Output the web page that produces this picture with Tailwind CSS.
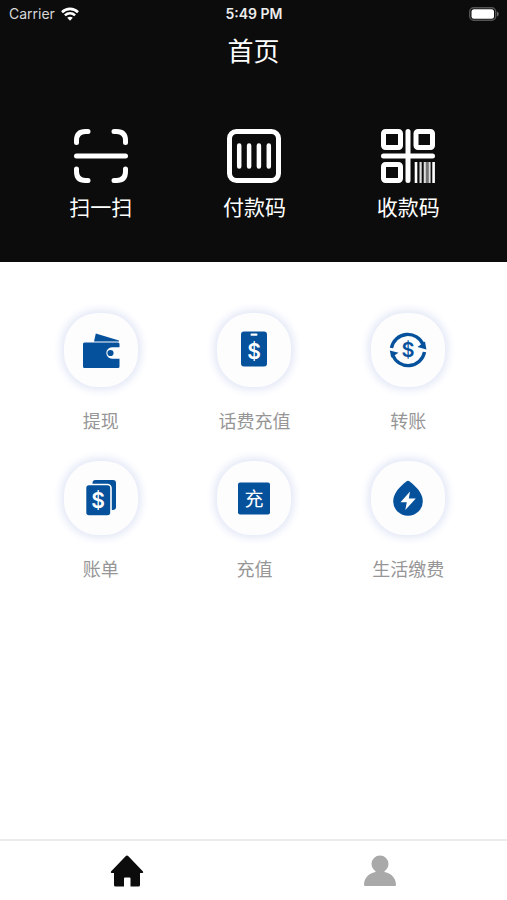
<!DOCTYPE html>
<html lang="zh-CN">
<head>
<meta charset="utf-8">
<meta name="viewport" content="width=device-width, initial-scale=1">
<title>首页</title>
<script src="https://cdn.jsdelivr.net/npm/@tailwindcss/browser@4"></script>
</head>
<body class="flex min-h-screen flex-col bg-white font-['Inter','Noto_Sans_CJK_SC',sans-serif]">
<header class="bg-[#0c0c0c] pb-[39px] text-white">
  <div class="grid h-7 grid-cols-3 items-center pr-2 pl-[9px] text-[14px] leading-5">
    <div class="flex items-center gap-[6px] text-[#d8d8d8]">
      <span>Carrier</span>
      <svg class="h-[14px] w-[18px]" viewBox="0 0 18 14" fill="none" stroke="#fff" stroke-width="2.6" aria-hidden="true">
        <path d="M1 5.2C5.6.8 12.4.8 17 5.2"/><path d="M3.9 8.4c3-2.8 7.200-2.800 10.200 0"/><path d="M6.200 10.800c1.700-1.500 3.900-1.500 5.600 0L9 13.700z" fill="#fff" stroke="none"/>
      </svg>
    </div>
    <div class="text-center text-[14px] font-semibold text-[#ededed]">5:49 PM</div>
    <svg class="h-[14px] w-[30px] justify-self-end" viewBox="0 0 30 14" aria-hidden="true">
      <rect x=".7" y=".7" width="26" height="12.600" rx="4" fill="none" stroke="#555" stroke-width="1.400"/>
      <rect x="2.500" y="2.300" width="22.500" height="9.400" rx="2.500" fill="#fff"/>
      <path d="M28 4.500c2.300 1 2.300 4 0 5z" fill="#666"/>
    </svg>
  </div>
  <h1 class="text-center text-[26px] leading-[48px]">首页</h1>
  <nav class="mt-[53px] grid grid-cols-3 pr-[22px] pl-6 text-[21px] leading-[30px]" aria-label="快捷操作">
    <button class="flex flex-col items-center gap-[10px]">
      <svg class="size-[54px]" viewBox="0 0 54 54" fill="none" stroke="#fff" stroke-width="5" stroke-linecap="round" aria-hidden="true">
        <path d="M2.500 13.500v-2Q2.500 2.500 11.500 2.500H14M40 2.500h2.500Q51.500 2.500 51.500 11.500V13.500M2.500 40v2.500Q2.500 51.500 11.500 51.500H14M40 51.500h2.500Q51.500 51.500 51.500 42.500V40M2.500 27h49"/>
      </svg>
      <span>扫一扫</span>
    </button>
    <button class="flex flex-col items-center gap-[10px]">
      <svg class="size-[54px]" viewBox="0 0 54 54" fill="none" stroke="#fff" aria-hidden="true">
        <rect x="2.500" y="2.500" width="49" height="49" rx="7" stroke-width="5"/>
        <path d="M12.200 16.500v21M22.100 16.500v21M31.900 16.500v21M41.800 16.500v21" stroke-width="4.500" stroke-linecap="round"/>
      </svg>
      <span>付款码</span>
    </button>
    <button class="flex flex-col items-center gap-[10px]">
      <svg class="size-[54px]" viewBox="0 0 54 54" fill="none" stroke="#fff" stroke-width="5" aria-hidden="true">
        <rect x="2.500" y="2.500" width="17" height="16" rx="2"/><rect x="35" y="2.500" width="16.500" height="16" rx="2"/><rect x="2.500" y="35.500" width="17" height="16" rx="2"/>
        <path d="M27 2.500v49M2.500 27h49" stroke-linecap="round"/>
        <path d="M35 33v21M52.600 33v21" stroke-width="2.600"/><path d="M39.600 33v21M43.800 33v21M48.500 33v21" stroke-width="2.200" stroke="#ddd"/><path d="M46 33v21" stroke-width="1.500" stroke="#999"/>
      </svg>
      <span>收款码</span>
    </button>
  </nav>
</header>

<main class="flex-1">
  <div class="grid grid-cols-3 gap-y-[25px] pt-[51px] pr-[22px] pl-6 text-[18px] leading-7 text-[#969696]">
    <button class="flex flex-col items-center gap-[21px]">
      <span class="grid size-[74px] place-items-center rounded-[34px] bg-[#fdfdfe] shadow-[0_0_9px_3px_#e2e7f6]">
        <svg class="size-[40px]" viewBox="0 0 40 40" fill="#05519b" aria-hidden="true">
          <path d="M14.800 3.500 38 10.500v.9H13z"/><path d="M3.500 12.500H37q1.500 0 1.500 1.500v3.300h-7.500a5.700 5.700 0 0 0 0 11.400h7.500v7.800q0 1.500-1.500 1.500H3.500Q2 38 2 36.500V14Q2 12.500 3.500 12.500z"/><circle cx="29.500" cy="23" r="3.100"/>
        </svg>
      </span>
      <span>提现</span>
    </button>
    <button class="flex flex-col items-center gap-[21px]">
      <span class="grid size-[74px] place-items-center rounded-[34px] bg-[#fdfdfe] shadow-[0_0_9px_3px_#e2e7f6]">
        <svg class="size-[40px]" viewBox="0 0 40 40" aria-hidden="true">
          <rect x="7" y="1.500" width="26" height="35" rx="3" fill="#05519b"/><rect x="16.500" y="3.500" width="7" height="2.200" rx="1" fill="#fff"/>
          <text x="20" y="28.500" text-anchor="middle" font-size="21" font-weight="600" fill="#fff" font-family="Inter,sans-serif">$</text>
        </svg>
      </span>
      <span>话费充值</span>
    </button>
    <button class="flex flex-col items-center gap-[21px]">
      <span class="grid size-[74px] place-items-center rounded-[34px] bg-[#fdfdfe] shadow-[0_0_9px_3px_#e2e7f6]">
        <svg class="size-[40px]" viewBox="0 0 40 40" aria-hidden="true">
          <path d="M3.500 18A16.600 16.600 0 0 1 35.300 15M36.500 22A16.600 16.600 0 0 1 4.700 25" fill="none" stroke="#05519b" stroke-width="3.400"/>
          <path d="M37 11.500 38.400 19.500 29.500 17zM1.800 20.500 10.500 22.800 3.200 27.500z" fill="#05519b"/>
          <text x="20" y="27" text-anchor="middle" font-size="20" font-weight="600" fill="#05519b" font-family="Inter,sans-serif">$</text>
        </svg>
      </span>
      <span>转账</span>
    </button>
    <button class="flex flex-col items-center gap-[21px]">
      <span class="grid size-[74px] place-items-center rounded-[34px] bg-[#fdfdfe] shadow-[0_0_9px_3px_#e2e7f6]">
        <svg class="size-[40px]" viewBox="0 0 40 40" aria-hidden="true">
          <rect x="11.500" y="2" width="23.500" height="30" rx="3" fill="#05519b"/>
          <rect x="4.500" y="6.500" width="25.500" height="31.500" rx="3.500" fill="#05519b" stroke="#fff" stroke-width="1.600"/>
          <text x="17" y="30" text-anchor="middle" font-size="21" font-weight="600" fill="#fff" font-family="Inter,sans-serif">$</text>
        </svg>
      </span>
      <span>账单</span>
    </button>
    <button class="flex flex-col items-center gap-[21px]">
      <span class="grid size-[74px] place-items-center rounded-[34px] bg-[#fdfdfe] shadow-[0_0_9px_3px_#e2e7f6]">
        <svg class="size-[40px]" viewBox="0 0 40 40" aria-hidden="true">
          <rect x="4" y="4.500" width="32" height="32" rx="2" fill="#05519b"/>
          <text x="20" y="27.500" text-anchor="middle" font-size="19" fill="#fff" font-family="'Noto Sans CJK SC',sans-serif">充</text>
        </svg>
      </span>
      <span>充值</span>
    </button>
    <button class="flex flex-col items-center gap-[21px]">
      <span class="grid size-[74px] place-items-center rounded-[34px] bg-[#fdfdfe] shadow-[0_0_9px_3px_#e2e7f6]">
        <svg class="size-[40px]" viewBox="0 0 40 40" aria-hidden="true">
          <path d="M18.600 3.300Q20 2.300 21.400 3.300C28 8.500 34.800 15 34.800 23.500a14.800 14.300 0 0 1-29.600 0C5.200 15 12 8.500 18.600 3.300z" fill="#05519b"/>
          <path d="M22 13.500 12.500 24.200h6.300l-1.500 7.800L27.800 20.500h-7z" fill="#fff"/>
        </svg>
      </span>
      <span>生活缴费</span>
    </button>
  </div>
</main>

<nav class="grid h-[61px] grid-cols-2 border-t-2 border-[#ebebeb] bg-white" aria-label="主导航">
  <a href="#home" class="grid place-items-center" aria-label="首页" aria-current="page">
    <svg class="h-[32px] w-[34px]" viewBox="0 0 34 32" fill="#0c0c0c" aria-hidden="true"><path d="M15.600 1.200Q17 0 18.400 1.200L33 16.500q.8 1.500-.8 1.500H30v12q0 1.500-1.500 1.500H20.500V23.500q0-1-1-1h-4.500q-1 0-1 1v8H5.500Q4 31.500 4 30V18H1.800Q.2 18 1 16.500z"/></svg>
  </a>
  <a href="#me" class="grid place-items-center" aria-label="我的">
    <svg class="h-[32px] w-[34px]" viewBox="0 0 34 32" fill="#a9a9a9" aria-hidden="true"><circle cx="17" cy="9" r="8.500"/><path d="M12.500 15h9v2C29 18.500 33 23.500 33 30q0 1-1 1H2q-1 0-1-1C1 23.500 5 18.500 12.500 17z"/></svg>
  </a>
</nav>
</body>
</html>
